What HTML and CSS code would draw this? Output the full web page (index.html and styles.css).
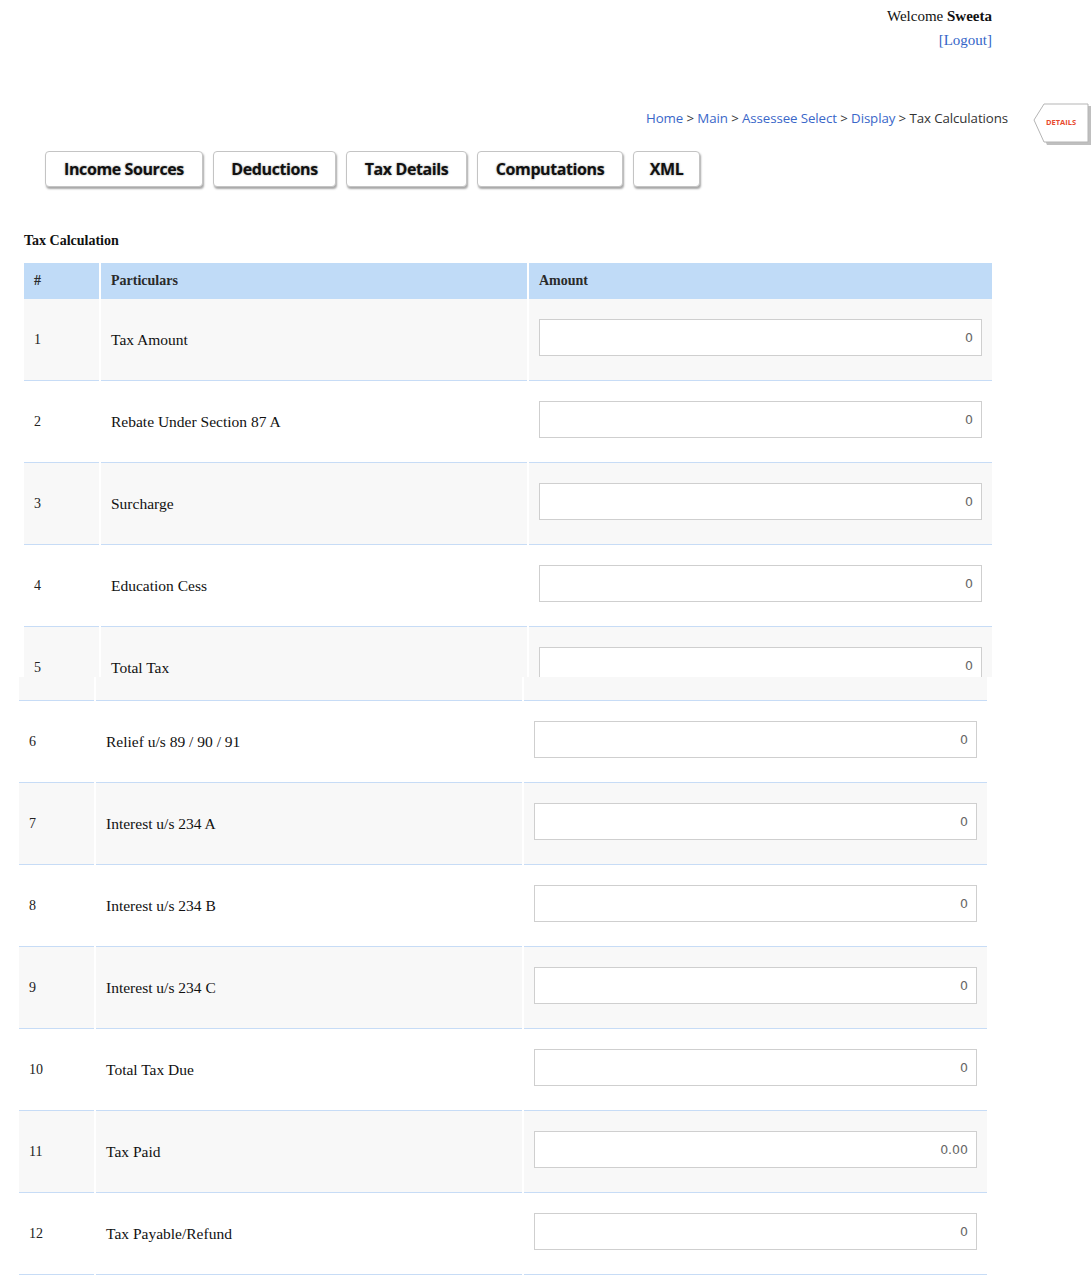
FILE: index.html
```html
<!DOCTYPE html>
<html>
<head>
<meta charset="utf-8">
<link rel="stylesheet" href="styles.css">
</head>
<body>
<div class="page">
  <div class="user">
    <div>Welcome <b>Sweeta</b></div>
    <div><a href="#" class="logout">[Logout]</a></div>
  </div>

  <div class="crumbbar">
    <div class="crumbs">
      <a href="#">Home</a> &gt; <a href="#">Main</a> &gt; <a href="#">Assessee Select</a> &gt; <a href="#">Display</a> &gt; <span>Tax Calculations</span>
    </div>
    <div class="details-tab">
      <svg width="58" height="42" viewBox="0 0 58 42">
        <polygon points="4,19 14,3 58,3 58,42 14,42" fill="#8a8a8a" opacity="0.55"/>
        <polygon points="1,17 11,1 55,1 55,39 11,39" fill="#fff" stroke="#b5b5b5" stroke-width="1"/>
      </svg>
      <span class="details-text">DETAILS</span>
    </div>
  </div>

  <div class="tabs">
    <button class="tab">Income Sources</button>
    <button class="tab">Deductions</button>
    <button class="tab">Tax Details</button>
    <button class="tab">Computations</button>
    <button class="tab">XML</button>
  </div>

  <div class="title">Tax Calculation</div>

  <div class="part part-one">
    <table class="calc">
      <colgroup><col class="c1"><col class="c2"><col class="c3"></colgroup>
      <thead>
        <tr><th>#</th><th>Particulars</th><th>Amount</th></tr>
      </thead>
      <tbody>
        <tr class="odd"><td class="num">1</td><td class="lbl">Tax Amount</td><td class="amt"><input type="text" value="0"></td></tr>
        <tr><td class="num">2</td><td class="lbl">Rebate Under Section 87 A</td><td class="amt"><input type="text" value="0"></td></tr>
        <tr class="odd"><td class="num">3</td><td class="lbl">Surcharge</td><td class="amt"><input type="text" value="0"></td></tr>
        <tr><td class="num">4</td><td class="lbl">Education Cess</td><td class="amt"><input type="text" value="0"></td></tr>
        <tr class="odd"><td class="num">5</td><td class="lbl">Total Tax</td><td class="amt"><input type="text" value="0"></td></tr>
      </tbody>
    </table>
  </div>

  <div class="part part-two">
    <table class="calc">
      <colgroup><col class="c1"><col class="c2"><col class="c3"></colgroup>
      <tbody>
        <tr class="odd strip"><td></td><td></td><td></td></tr>
        <tr><td class="num">6</td><td class="lbl">Relief u/s 89 / 90 / 91</td><td class="amt"><input type="text" value="0"></td></tr>
        <tr class="odd"><td class="num">7</td><td class="lbl">Interest u/s 234 A</td><td class="amt"><input type="text" value="0"></td></tr>
        <tr><td class="num">8</td><td class="lbl">Interest u/s 234 B</td><td class="amt"><input type="text" value="0"></td></tr>
        <tr class="odd"><td class="num">9</td><td class="lbl">Interest u/s 234 C</td><td class="amt"><input type="text" value="0"></td></tr>
        <tr><td class="num">10</td><td class="lbl">Total Tax Due</td><td class="amt"><input type="text" value="0"></td></tr>
        <tr class="odd"><td class="num">11</td><td class="lbl">Tax Paid</td><td class="amt"><input type="text" value="0.00"></td></tr>
        <tr><td class="num">12</td><td class="lbl">Tax Payable/Refund</td><td class="amt"><input type="text" value="0"></td></tr>
      </tbody>
    </table>
  </div>
</div>
</body>
</html>
```
FILE: styles.css
```css
html, body {
  margin: 0;
  padding: 0;
  background: #fff;
}
body {
  font-family: "Liberation Serif", "Times New Roman", serif;
  color: #111;
  width: 1091px;
}
.page {
  position: relative;
  padding-bottom: 10px;
}
.user {
  text-align: right;
  padding-top: 4px;
  padding-right: 99px;
  font-size: 15px;
  line-height: 24px;
}
.logout {
  color: #3465c8;
  text-decoration: none;
}
.crumbbar {
  margin-top: 56px;
  display: flex;
  justify-content: flex-end;
  padding-right: 83px;
  height: 20px;
}
.crumbs {
  font-family: "Open Sans", "Noto Sans", sans-serif;
  font-size: 13.3px;
  line-height: 20px;
  color: #333;
  letter-spacing: -0.1px;
}
.crumbs a {
  color: #3a67c9;
  text-decoration: none;
}
.details-tab {
  position: absolute;
  left: 1033px;
  top: 103px;
  width: 58px;
  height: 42px;
}
.details-tab svg {
  position: absolute;
  left: 0;
  top: 0;
}
.details-text {
  position: absolute;
  left: 13px;
  top: 14px;
  font-family: "Open Sans", "Noto Sans", sans-serif;
  font-weight: 700;
  font-size: 7.5px;
  color: #e84a2e;
}
.tabs {
  margin-top: 23px;
  padding-left: 45px;
  display: flex;
  gap: 10px;
}
.tab {
  box-sizing: border-box;
  height: 36px;
  padding: 0;
  background: #fff;
  border: 1px solid #c4c4c4;
  border-radius: 4px;
  box-shadow: 1px 2px 2px rgba(0,0,0,0.35);
  font-family: "Open Sans", "Noto Sans", sans-serif;
  font-weight: 700;
  font-size: 16px;
  letter-spacing: -0.4px;
  color: #111;
  text-shadow: 0 0 2px rgba(0,0,0,0.45);
  cursor: pointer;
}
.tab:nth-child(1) { width: 158px; }
.tab:nth-child(2) { width: 123px; }
.tab:nth-child(3) { width: 121px; }
.tab:nth-child(4) { width: 146px; }
.tab:nth-child(5) { width: 67px; }
.title {
  margin-top: 44px;
  padding-left: 24px;
  font-weight: 700;
  font-size: 14px;
  line-height: 20px;
  color: #111;
}
.part-one {
  margin-top: 12px;
  margin-left: 24px;
  width: 968px;
  height: 414px;
  overflow: hidden;
}
.part-two {
  margin-left: 19px;
  width: 968px;
}
.calc {
  width: 968px;
  border-collapse: collapse;
  table-layout: fixed;
}
.c1 { width: 76px; }
.c2 { width: 428px; }
.c3 { width: 464px; }
.calc th {
  background: #c0dbf7;
  height: 36px;
  padding: 0 0 0 10px;
  text-align: left;
  font-size: 14px;
  font-weight: 700;
  color: #2a2a2a;
  border-left: 2px solid #fff;
  vertical-align: middle;
}
.calc th:first-child { border-left: 0; }
.calc td {
  border-bottom: 1px solid #c7dcf6;
  border-left: 2px solid #fff;
  vertical-align: middle;
  font-size: 15.5px;
  color: #111;
}
.calc td:first-child { border-left: 0; }
.calc tr.odd td { background: #f8f8f8; }
.calc td.num {
  padding: 0 0 0 10px;
  font-size: 14px;
  color: #222;
}
.calc td.lbl {
  padding: 0 0 0 10px;
}
.calc td.amt {
  padding: 20px 9px 24px 10px;
}
.calc tr.strip td {
  height: 23px;
  padding: 0;
}
.calc input {
  display: block;
  box-sizing: border-box;
  width: 443px;
  height: 37px;
  margin: 0;
  padding: 0 8px;
  border: 1px solid #cfcfcf;
  background: #fff;
  text-align: right;
  font-family: "DejaVu Sans", "Open Sans", sans-serif;
  font-size: 12.5px;
  color: #666;
  outline: none;
}
```
